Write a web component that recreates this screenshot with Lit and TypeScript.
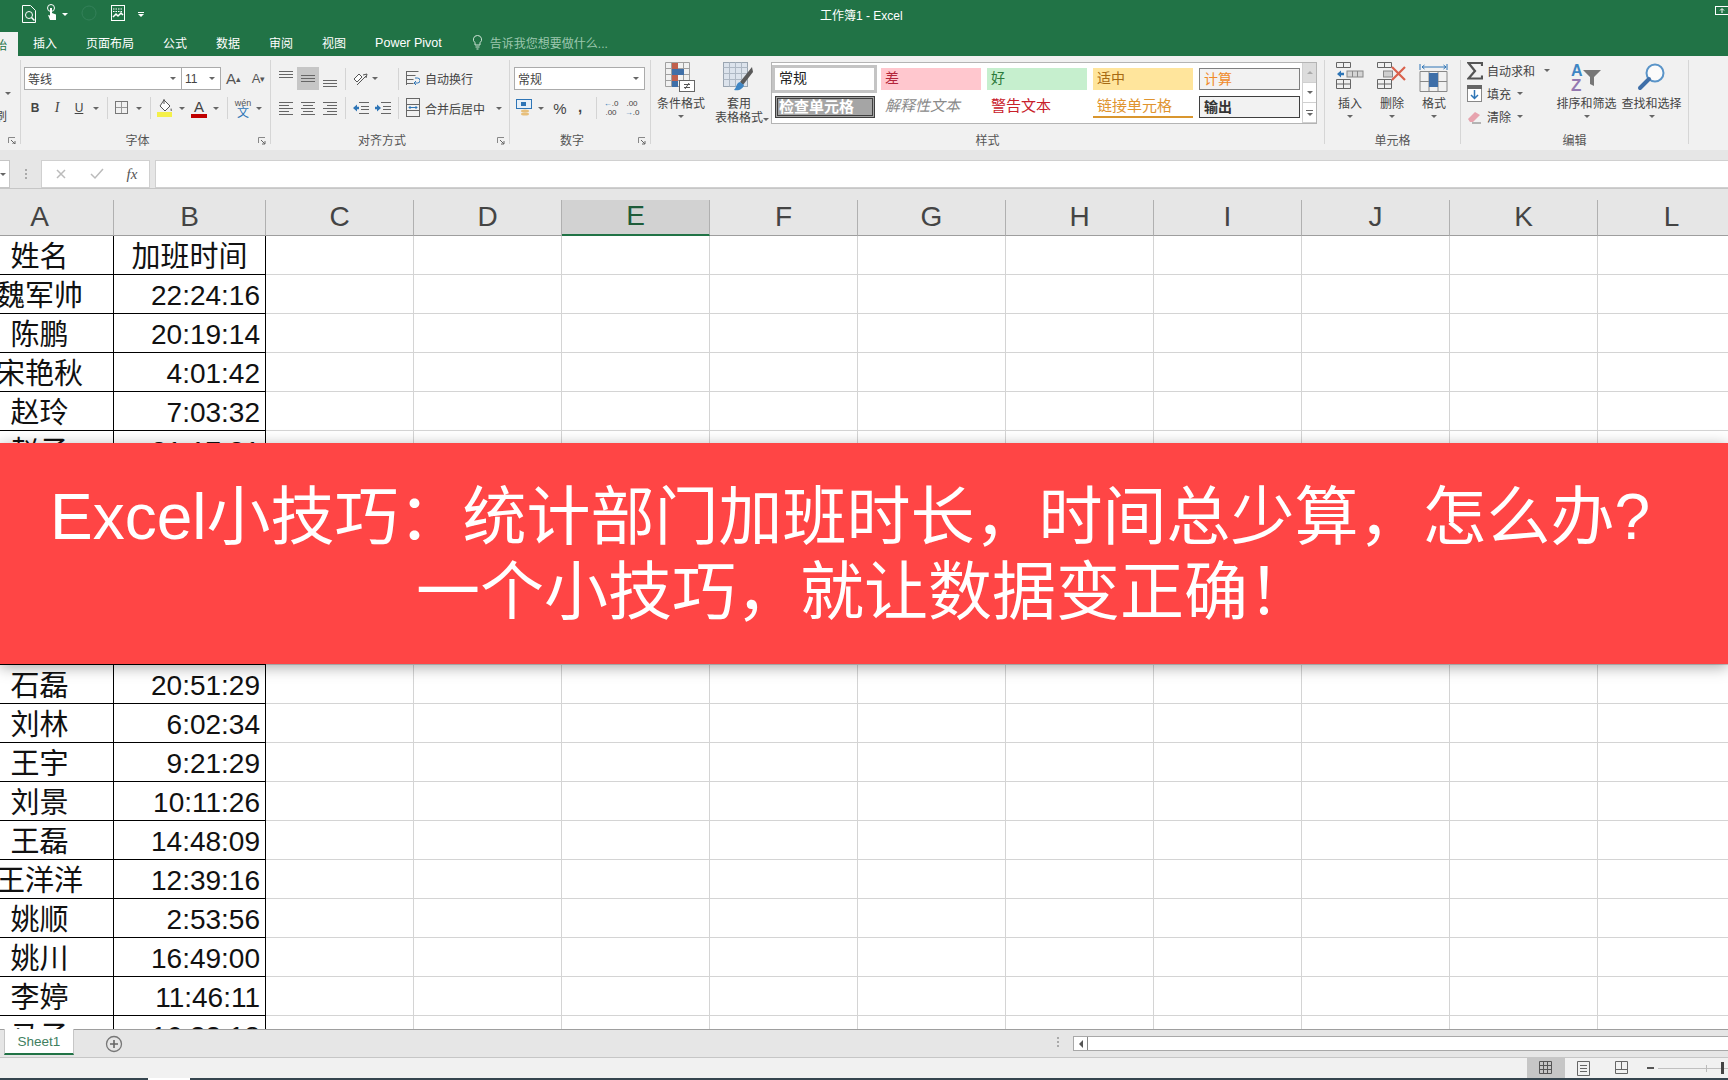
import { LitElement, html, css, svg } from "lit";
import { customElement } from "lit/decorators.js";

const caret = html`<i class="caret"></i>`;
const sep = html`<div class="c"><i class="sep"></i></div>`;

const ic = (w: number, h: number, body: unknown) =>
  html`<svg width=${w} height=${h} viewBox="0 0 ${w} ${h}" fill="none">${body}</svg>`;

const lines = (rows: [number, number, number][], stroke = "#666") =>
  ic(16, 22, rows.map(([x1, x2, y]) => svg`<path d="M${x1} ${y + 0.5}H${x2}" stroke=${stroke}/>`));

const iconTop = lines([[1, 15, 3], [1, 15, 6], [1, 15, 9]]);
const iconMid = lines([[1, 15, 7], [1, 15, 10], [1, 15, 13]]);
const iconBot = lines([[1, 15, 12], [1, 15, 15], [1, 15, 18]]);
const iconL = lines([[1, 15, 5], [1, 11, 8], [1, 15, 11], [1, 11, 14], [1, 15, 17]]);
const iconC = lines([[1, 15, 5], [3, 13, 8], [1, 15, 11], [3, 13, 14], [1, 15, 17]]);
const iconR = lines([[1, 15, 5], [5, 15, 8], [1, 15, 11], [5, 15, 14], [1, 15, 17]]);

const iconOutdent = ic(18, 16, svg`<path d="M7 2.5H17M9 6.5H17M9 9.5H17M7 13.5H17" stroke="#666"/><path d="M1 8l4-3.5v2.3h2v2.4H5v2.3z" fill="#2e75b6"/>`);
const iconIndent = ic(18, 16, svg`<path d="M7 2.5H17M9 6.5H17M9 9.5H17M7 13.5H17" stroke="#666"/><path d="M7 8L3 4.500v2.300H1v2.400h2v2.300z" fill="#2e75b6"/>`);

const iconOrient = ic(18, 18, svg`<path d="M3 9l5-5 3 3-5 5z" stroke="#555" fill="#fff"/><path d="M6 15l9-9" stroke="#555"/><path d="M12 5l4-1-1 4" stroke="#555"/>`);
const iconWrap = ic(14, 18, svg`<path d="M.5 1.500h12M.5 5.500h9M.5 9.500h7M.5 13.500h7M.5 1v14" stroke="#666"/><path d="M9 13h2.500a2 2 0 000-5H9" stroke="#2e75b6"/><path d="M10 11l-2 2 2 2" stroke="#2e75b6"/>`);
const iconMerge = ic(14, 20, svg`<rect x=".5" y=".5" width="13" height="18" stroke="#666"/><path d="M.5 6.500h13M.5 12.500h13" stroke="#666"/><path d="M3 9.500h8M4.500 8l-1.500 1.500L4.500 11M9.500 8l1.500 1.500L9.500 11" stroke="#2e75b6"/>`);
const iconBorder = ic(14, 14, svg`<rect x=".5" y=".5" width="12" height="12" stroke="#777"/><path d="M6.500 1v11M1 6.500h11" stroke="#999"/>`);
const iconFill = ic(18, 20, svg`<path d="M8 2l6 6-5 5-5-5z" stroke="#555" fill="#fff"/><path d="M8 1v5" stroke="#555"/><path d="M15 10c1 1.500 1.500 2.500 .5 3s-1.500-1.500-.5-3z" fill="#777"/><rect x="1" y="14" width="15" height="5" fill="#f4f04a"/>`);
const iconCurrency = ic(18, 20, svg`<rect x=".5" y="1.500" width="15" height="9" stroke="#2e75b6" fill="#e7f0f8"/><rect x="5" y="4" width="5" height="4" fill="#2e75b6"/><ellipse cx="9" cy="13" rx="4" ry="1.500" fill="#e7bf7b"/><ellipse cx="9" cy="16" rx="4" ry="1.500" fill="#e7bf7b"/>`);

const iconCond = ic(32, 30, svg`
  <path d="M.5 .5h24v24H.5zM6.500 .5v24M12.500 .5v24M18.500 .5v24M.5 6.500h24M.5 12.500h24M.5 18.500h24" stroke="#a0a0a0"/>
  <rect x="7" y="1" width="6" height="6" fill="#c0604d"/><rect x="7" y="7" width="12" height="6" fill="#3f6fa8"/>
  <rect x="7" y="13" width="6" height="6" fill="#c0604d"/><rect x="7" y="19" width="6" height="6" fill="#3f6fa8"/>
  <rect x="14.500" y="18.500" width="15" height="11" fill="#fff" stroke="#666"/>
  <path d="M19 22.500h6M19 25.500h6M24 21l-4 6" stroke="#555"/>`);
const iconTable = ic(32, 30, svg`
  <rect x=".5" y=".5" width="24" height="24" fill="#dce3ec" stroke="#9aa5b1"/>
  <path d="M.5 5.500h24M.5 11.500h24M.5 17.500h24M6.500 .5v24M12.500 .5v24M18.500 .5v24" stroke="#aeb8c4"/>
  <path d="M29 5L17 20l3 3 10-13z" fill="#5a5a5a"/>
  <path d="M17 20c-4 1-3 5-6 8 5 1 9-1 10-5z" fill="#3f86c4"/>`);
const iconIns = ic(28, 28, svg`
  <path d="M.5 .5h14v5h-14zM7.500 .5v5M.5 17.500h14v9h-14zM7.500 17.500v9M.5 22h14" stroke="#666"/>
  <rect x="11" y="9" width="16" height="6" fill="#d5d5d5" stroke="#888"/><path d="M16.500 9v6M21.500 9v6" stroke="#888"/>
  <path d="M1 12l4-3.500v2.300h3v2.400H5v2.300z" fill="#2e75b6"/>`);
const iconDel = ic(30, 28, svg`
  <path d="M.5 .5h14v5h-14zM7.500 .5v5M.5 17.500h14v9h-14zM7.500 17.500v9M.5 22h14" stroke="#666"/>
  <rect x="6.500" y="9" width="9" height="6" fill="#cfcfcf" stroke="#888"/>
  <path d="M15 5l13 13M28 5L15 18" stroke="#d9614c" stroke-width="2.200"/>`);
const iconFmt = ic(30, 30, svg`
  <path d="M1 2v6M28 2v6M3 5h24M3 5l2.500-2M3 5l2.500 2M27 5l-2.500-2M27 5l-2.500 2" stroke="#2e75b6"/>
  <path d="M1 9.500h27v20H1zM10 9.500v20M19 9.500v20M1 19.500h27" stroke="#888"/>
  <rect x="10" y="11" width="9" height="14" fill="#3f6fa8"/>`);
const iconSigma = ic(16, 18, svg`<path d="M15 4V1H1.500L8 9l-6.500 7.500H15v-3" stroke="#555" stroke-width="2.200"/>`);
const iconDown = ic(15, 17, svg`<rect x=".5" y=".5" width="14" height="16" fill="#fff" stroke="#888"/><rect x="0" y="0" width="15" height="4" fill="#666"/><path d="M7.500 5v8M4 10l3.500 3.500L11 10" stroke="#2e75b6" stroke-width="1.500"/>`);
const iconEraser = ic(15, 14, svg`<path d="M1 9l7-7 5 3-7 7H3z" fill="#e7a3ae"/><path d="M5 13h9" stroke="#777"/>`);
const iconSort = ic(32, 30, svg`
  <text x="0" y="14" font-size="16" font-weight="700" fill="#3f86c4" font-family="Liberation Sans">A</text>
  <text x="0" y="29" font-size="17" font-weight="700" fill="#9478b0" font-family="Liberation Sans">Z</text>
  <path d="M12 8h18l-7 7v9l-4-2v-7z" fill="#777"/>`);
const iconFind = ic(30, 30, svg`<circle cx="18" cy="11" r="8.500" stroke="#5a94c8" stroke-width="2" fill="#fbfbfb"/><path d="M12 17L3 26" stroke="#3f6fa8" stroke-width="4" stroke-linecap="round"/>`);
const launcher = html`<svg class="launcher" width="8" height="8" viewBox="0 0 8 8" fill="none"><path d="M.5 6V.5H7" stroke="#888"/><path d="M3 3l4 4M7 4v3H4" stroke="#666"/></svg>`;

type Big = { icon: unknown; lines: string[]; cls?: string };
const big = (b: Big) => html`
  <div class="big ${b.cls ?? ""}">
    <div class="big-ic">${b.icon}</div>
    ${b.lines.map((l) => html`<div class="big-t">${l}</div>`)}
    ${caret}
  </div>`;

const COLS = ["A", "B", "C", "D", "E", "F", "G", "H", "I", "J", "K", "L", "M"];
const ROWS: [string, string][] = [
  ["姓名", "加班时间"], ["魏军帅", "22:24:16"], ["陈鹏", "20:19:14"], ["宋艳秋", "4:01:42"], ["赵玲", "7:03:32"],
  ["赵子", "21:17:31"], ["", ""], ["", ""], ["", ""], ["", ""], ["", ""],
  ["石磊", "20:51:29"], ["刘林", "6:02:34"], ["王宇", "9:21:29"], ["刘景", "10:11:26"], ["王磊", "14:48:09"],
  ["王洋洋", "12:39:16"], ["姚顺", "2:53:56"], ["姚川", "16:49:00"], ["李婷", "11:46:11"], ["马子", "16:33:18"],
];

@customElement("app-root")
export class AppRoot extends LitElement {
  static styles = css`
    :host { display: block; position: relative; width: 1728px; height: 1080px; overflow: hidden; background: #e6e6e6;
      font-family: "Liberation Sans", "Noto Sans CJK SC", sans-serif; color: #444; font-size: 12px; }
    .app { display: flex; flex-direction: column; height: 1080px; }
    i { display: block; font-style: normal; }
    .caret { width: 0; height: 0; border: 3px solid transparent; border-top: 3px solid #666; border-bottom: 0; }
    .c { display: flex; align-items: center; justify-content: center; height: 100%; min-width: 0; }
    .sep { width: 1px; height: 22px; background: #d4d4d4; }

    .title { height: 28px; background: #217346; display: grid; grid-template-columns: 820px auto 1fr; align-items: center; color: #fff; }
    .qat { display: flex; align-items: center; padding-left: 22px; height: 28px; }
    .qat .caret { border-top-color: #fff; }
    .qat-touch { margin-left: 9px; }
    .qat-c1 { margin-left: 4px; }
    .qat-circle { margin-left: 13px; }
    .qat-chart { margin-left: 14px; }
    .qat-more { margin-left: 13px; display: flex; flex-direction: column; gap: 1px; align-items: center; }
    .qat-more b { display: block; width: 6px; height: 1px; background: #fff; }
    .win { justify-self: end; margin-top: -6px; }

    .tabs { height: 28px; background: #217346; display: flex; align-items: center; gap: 29px; color: #fff; }
    .tab-active { align-self: flex-end; height: 24px; width: 18px; background: #f1f1f1; color: #217346; display: flex; justify-content: flex-end; align-items: center; padding-right: 11px; box-sizing: border-box; overflow: hidden; margin-right: -14px; white-space: nowrap; flex: none; }
    .tab-pp { font-size: 12.5px; padding-top: 1px; }
    .tell { display: flex; align-items: center; gap: 8px; color: #9cc7ae; margin-left: 2px; }

    .ribbon { height: 94px; background: #f1f1f1; display: flex; padding-top: 4px; box-sizing: border-box; align-items: flex-start; }
    .group { height: 84px; border-right: 1px solid #d6d6d6; display: grid; grid-template-rows: 72px 12px; flex: none; box-sizing: border-box; }
    .body { min-width: 0; }
    .label { display: grid; grid-template-columns: 1fr; align-items: center; line-height: 16px; height: 16px; margin-top: 1px; color: #555; text-align: center; }
    .label.has-l { grid-template-columns: 1fr 16px; }
    .label.clip { grid-template-columns: 4px 16px; }
    .launcher { justify-self: center; }
    .g-clip { width: 21px; overflow: hidden; }
    .g-clip .body { display: flex; flex-direction: column; align-items: flex-start; }
    .clip-caret { margin: 32px 0 0 5px; }
    .clip-t { margin: 14px 0 0 -5px; line-height: 16px; white-space: nowrap; }
    .g-font { width: 250px; padding-left: 3px; }
    .g-align { width: 239px; padding-left: 4px; }
    .g-num { width: 141px; padding-left: 4px; }
    .g-style { width: 674px; }
    .g-cells { width: 136px; }
    .g-edit { width: 228px; }
    .g-font .label { margin-left: -3px; }
    .g-align .label, .g-num .label { margin-left: -4px; }

    .r1 { height: 23px; margin-top: 7px; display: grid; }
    .r2 { height: 24px; margin-top: 6px; display: grid; }
    .f1 { grid-template-columns: 158px 39px 25px 25px; }
    .f2 { grid-template-columns: 22px 22px 22px 12px 10px 20px 14px 8px 22px 12px 22px 12px 10px 22px 10px; }
    .a1 { grid-template-columns: 22px 22px 22px 8px 22px 8px 14px 10px 1fr; }
    .a2 { grid-template-columns: 22px 22px 22px 8px 24px 20px 10px 1fr; }
    .n2 { grid-template-columns: 22px 10px 4px 20px 20px 1px 10px 20px 1px 20px; }
    .combo { background: #fff; border: 1px solid #ababab; box-sizing: border-box; display: flex; align-items: center; justify-content: space-between; padding: 0 5px 0 3px; height: 23px; }
    .combo + .combo { border-left: 0; }
    .combo.num { width: 131px; }
    .hl { background: #c6c6c6; }
    .b { font-weight: 700; }
    .it { font-style: italic; font-family: "Liberation Serif", serif; font-size: 14px; }
    .u { text-decoration: underline; }
    .aa { font-size: 15px; color: #555; }
    .aa small { font-size: 9px; vertical-align: 7px; }
    .aa2 { font-size: 13px; }
    .color { display: flex; flex-direction: column; align-items: center; line-height: 15px; font-size: 15px; }
    .color i { width: 16px; height: 4px; background: #c00000; }
    .wen { display: flex; flex-direction: column; align-items: center; font-size: 9px; line-height: 10px; color: #555; }
    .wen b { font-weight: 400; color: #2e75b6; font-size: 12px; line-height: 11px; }
    .lbl { display: flex; align-items: center; gap: 5px; height: 100%; white-space: nowrap; margin-left: 3px; }
    .m-left { margin-left: 6px; }
    .pct { font-size: 15px; }
    .com { font-size: 15px; font-weight: 700; padding-bottom: 4px; box-sizing: border-box; }
    .dec { font-size: 8px; line-height: 9px; text-align: center; white-space: nowrap; }
    .dec b { font-weight: 400; color: #2e75b6; }

    .g-style .body { display: flex; align-items: flex-start; }
    .big { display: flex; flex-direction: column; align-items: center; flex: none; }
    .big-ic { height: 34px; margin-top: 2px; display: flex; align-items: flex-start; justify-content: center; }
    .big-t { line-height: 16px; white-space: nowrap; }
    .big .caret { margin-top: 3px; }
    .big-t + .big-t { margin-top: -2px; }
    .w-cond { width: 60px; }
    .w-tbl { width: 56px; position: relative; }
    .w-tbl .caret { position: absolute; left: 52px; top: 58px; margin: 0; }
    .gallery { width: 546px; height: 62px; margin: 2px 0 0 4px; border: 1px solid #b4b4b4; background: #fff; box-sizing: border-box; display: flex; justify-content: space-between; }
    .g-grid { display: grid; grid-template-columns: repeat(5, 100px); grid-auto-rows: 22px; gap: 6px; padding: 5px 0 0 3px; }
    .sty { font-size: 14px; line-height: 20px; padding-left: 4px; box-sizing: border-box; white-space: nowrap; overflow: hidden; }
    .s-norm { outline: 3px solid #c4c4c4; outline-offset: 0; margin: 0 1px 0 0; color: #222; }
    .s-bad { background: #ffc7ce; color: #b3243a; }
    .s-good { background: #c6efce; color: #2c7a3a; }
    .s-mid { background: #ffe59c; color: #a66a12; }
    .s-calc { background: #f2f2f2; border: 1px solid #7f7f7f; color: #f08a2a; line-height: 20px; margin-right: -1px; }
    .s-chk { background: #a5a5a5; border: 3px double #3f3f3f; color: #fff; font-size: 15px; line-height: 16px; padding-left: 1px; font-weight: 700; }
    .s-exp { color: #8a8a8a; font-style: italic; font-size: 15px; }
    .s-warn { color: #c8202a; font-size: 15px; }
    .s-link { color: #e0942f; border-bottom: 2px solid #d9962e; font-size: 15px; }
    .s-out { background: #f2f2f2; border: 1px solid #3f3f3f; color: #333; line-height: 20px; margin-right: -1px; font-weight: 700; }
    .g-scroll { width: 13px; border-left: 1px solid #d0d0d0; display: grid; grid-template-rows: 1fr 1fr 1fr; box-sizing: content-box; }
    .g-scroll > div { display: flex; align-items: center; justify-content: center; flex-direction: column; gap: 2px; border-bottom: 1px solid #d0d0d0; }
    .g-scroll > div:first-child { background: #dcdcdc; }
    .g-scroll > div:first-child .caret { transform: rotate(180deg); border-top-color: #aaa; }
    .g-scroll b { display: block; width: 7px; height: 1px; background: #666; }

    .g-cells .body { display: flex; padding-left: 4px; }
    .w-c { width: 42px; }
    .g-edit .body { display: flex; }
    .ed-col { width: 93px; padding: 0 0 0 6px; margin-top: -1px; box-sizing: border-box; display: grid; grid-template-rows: 23px 23px 23px; }
    .ed-row { display: flex; align-items: center; gap: 5px; white-space: nowrap; font-size: 12px; }
    .ed-row .caret { margin-left: 1px; }
    .ed-row.sum { gap: 4px; }
    .ed-row.sum .caret { margin-left: 5px; }
    .w-e { width: 65px; }

    .fgap { height: 10px; background: #e6e6e6; }
    .fbar { height: 28px; background: #e6e6e6; display: flex; }
    .fname { width: 10px; background: #fff; border: 1px solid #c6c6c6; border-left: 0; box-sizing: border-box; display: flex; align-items: center; }
    .fdots { width: 31px; display: flex; flex-direction: column; align-items: center; justify-content: center; gap: 2px; }
    .fdots b { display: block; width: 2px; height: 2px; background: #aaa; }
    .fbtns { width: 109px; background: #fff; border: 1px solid #d0d0d0; box-sizing: border-box; display: grid; grid-template-columns: 37px 36px 1fr; color: #bbb; }
    .fx { color: #555; font-family: "Liberation Serif", serif; font-style: italic; font-size: 15px; }
    .finput { flex: 1; margin-left: 5px; background: #fff; border: 1px solid #d0d0d0; border-right: 0; box-sizing: border-box; }
    .sgap { height: 12px; background: #e6e6e6; border-top: 1px solid #c6c6c6; box-sizing: border-box; }

    .sheet { height: 829px; overflow: hidden; background: #fff; }
    .grid { display: grid; grid-template-columns: 148px 152px repeat(11, 148px); grid-template-rows: 36px; grid-auto-rows: 39px; margin-left: -34px; width: 1800px; color: #111; font-size: 28px; }
    .h { background: #e6e6e6; color: #444; border-right: 1px solid #b0b0b0; border-bottom: 1px solid #9e9e9e; box-sizing: border-box; display: flex; align-items: center; justify-content: center; padding-bottom: 2px; }
    .h.sel { background: #d2d2d2; color: #1f5c3a; border-bottom: 2px solid #217346; }
    .d { border-right: 1px solid #d4d4d4; border-bottom: 1px solid #d4d4d4; box-sizing: border-box; }
    .t { border-right: 1px solid #000; border-bottom: 1px solid #000; box-sizing: border-box; display: flex; align-items: center; justify-content: center; line-height: 38px; white-space: nowrap; padding-top: 4px; }
    .t.cjk { font-size: 29px; }
    .t.v { justify-content: flex-end; padding-right: 5px; }

    .tabbar { height: 29px; background: #e6e6e6; border-top: 1px solid #9e9e9e; border-bottom: 1px solid #c6c6c6; box-sizing: border-box; display: flex; align-items: flex-start; }
    .sheet-tab { margin: -1px 0 0 4px; width: 70px; height: 26px; box-sizing: border-box; background: #fff; border: 1px solid #c6c6c6; border-top: 0; border-bottom: 2px solid #217346; color: #3f7f5f; font-size: 13.5px; display: flex; align-items: center; justify-content: center; }
    .add { margin: 5px 0 0 31px; }
    .tab-dots { margin: 4px 0 0 929px; width: 12px; display: flex; flex-direction: column; gap: 2px; align-items: center; padding-top: 3px; }
    .tab-dots b { display: block; width: 2px; height: 2px; background: #aaa; }
    .hscroll { margin: 6px 0 0 9px; flex: 1; height: 15px; background: #fff; border: 1px solid #a8a8a8; border-right: 0; box-sizing: border-box; display: flex; }
    .hleft { width: 13px; border-right: 1px solid #888; display: flex; align-items: center; justify-content: center; }
    .tri { width: 0; height: 0; border: 4px solid transparent; border-right: 4px solid #555; border-left: 0; }

    .status { height: 20px; background: #f1f1f1; display: flex; align-items: center; }
    .vbtn { width: 38px; height: 20px; display: flex; align-items: center; justify-content: center; flex: none; }
    .vbtn.on { margin-left: 1527px; background: #c6c6c6; }
    .zoom-m { width: 7px; height: 2px; background: #555; margin-left: 6px; flex: none; }
    .slider { flex: 1; height: 1px; background: #c0c0c0; margin-left: 4px; display: flex; align-items: center; justify-content: flex-end; }
    .thumb { width: 3px; height: 12px; background: #444; margin-right: 4px; }
    .tick { width: 1px; height: 7px; background: #bbb; margin-right: 14px; }
    .bottom { height: 2px; background: #36454f; display: flex; }
    .bottom b { display: block; margin-left: 148px; width: 42px; background: #fff; }

    .band { position: absolute; left: 0; right: 0; top: 443px; height: 221px; padding-top: 2px; box-sizing: border-box; background: #ff4545; box-shadow: 0 3px 14px rgba(0,0,0,.35); display: flex; flex-direction: column; align-items: center; justify-content: center; color: #fff; font-size: 64px; line-height: 75px; white-space: nowrap; }
    .band-1 { margin-right: 28px; }
  `;

  render() {
    return html`
      <div class="app">
        <div class="title">
          <div class="qat">
            ${ic(15, 18, svg`<path d="M.5 .5h8l5 5v12H.5z" stroke="#fff"/><circle cx="7" cy="10" r="3.500" stroke="#fff"/><path d="M9.500 12.500l3 3" stroke="#fff" stroke-width="1.500"/>`)}
            <span class="qat-touch">${ic(12, 18, svg`<circle cx="5" cy="4" r="3.500" stroke="#fff"/><path d="M4 4h2v5l4 1.500V16H4L2 11l2 .5z" fill="#fff"/>`)}</span>
            <span class="qat-c1">${caret}</span>
            <span class="qat-circle">${ic(16, 16, svg`<circle cx="8" cy="8" r="7" stroke="#338059"/>`)}</span>
            <span class="qat-chart">${ic(14, 16, svg`<rect x=".5" y=".5" width="13" height="15" stroke="#fff"/><path d="M2 4h10M2 6.500h10" stroke="#fff" stroke-dasharray="1.500 1"/><path d="M2 12l3-3 2 2 3-3 2 2" stroke="#fff" stroke-width="1.500"/>`)}</span>
            <span class="qat-more"><b></b>${caret}</span>
          </div>
          <div>工作簿1 - Excel</div>
          <div class="win">${ic(13, 9, svg`<rect x=".5" y=".5" width="14" height="8" stroke="#fff"/><path d="M7 7V3M5 4.500l2-2 2 2" stroke="#fff"/>`)}</div>
        </div>

        <div class="tabs">
          <div class="tab-active">开始</div>
          <div>插入</div><div>页面布局</div><div>公式</div><div>数据</div><div>审阅</div><div>视图</div>
          <div class="tab-pp">Power Pivot</div>
          <div class="tell">${ic(9, 15, svg`<path d="M4.500 .5a4 4 0 012.500 7.200V10H2V7.700A4 4 0 014.500 .5zM2.500 12h4M3.500 14h2" stroke="#cfe3d6"/>`)}<span>告诉我您想要做什么...</span></div>
        </div>

        <div class="ribbon">
          <div class="group g-clip">
            <div class="body"><i class="caret clip-caret"></i><div class="clip-t">刷</div></div>
            <div class="label clip"><span></span>${launcher}</div>
          </div>

          <div class="group g-font">
            <div class="body">
              <div class="r1 f1">
                <div class="combo"><span>等线</span>${caret}</div>
                <div class="combo"><span>11</span>${caret}</div>
                <div class="c aa">A<small>▴</small></div>
                <div class="c aa aa2">A<small>▾</small></div>
              </div>
              <div class="r2 f2">
                <div class="c b">B</div><div class="c it">I</div><div class="c u">U</div><div class="c">${caret}</div>
                ${sep}
                <div class="c">${iconBorder}</div><div class="c">${caret}</div>
                ${sep}
                <div class="c">${iconFill}</div><div class="c">${caret}</div>
                <div class="c"><div class="color">A<i></i></div></div><div class="c">${caret}</div>
                ${sep}
                <div class="c"><div class="wen">wén<b>文</b></div></div><div class="c">${caret}</div>
              </div>
            </div>
            <div class="label has-l"><span>字体</span>${launcher}</div>
          </div>

          <div class="group g-align">
            <div class="body">
              <div class="r1 a1">
                <div class="c">${iconTop}</div><div class="c hl">${iconMid}</div><div class="c">${iconBot}</div>
                ${sep}
                <div class="c">${iconOrient}</div>
                <div class="c">${caret}</div><div></div>
                ${sep}
                <div class="lbl">${iconWrap}<span>自动换行</span></div>
              </div>
              <div class="r2 a2">
                <div class="c">${iconL}</div><div class="c">${iconC}</div><div class="c">${iconR}</div>
                ${sep}
                <div class="c">${iconOutdent}</div><div class="c">${iconIndent}</div>
                ${sep}
                <div class="lbl">${iconMerge}<span>合并后居中</span><span class="c m-left">${caret}</span></div>
              </div>
            </div>
            <div class="label has-l"><span>对齐方式</span>${launcher}</div>
          </div>

          <div class="group g-num">
            <div class="body">
              <div class="r1"><div class="combo num"><span>常规</span>${caret}</div></div>
              <div class="r2 n2">
                <div class="c">${iconCurrency}</div><div class="c">${caret}</div><div></div>
                <div class="c pct">%</div><div class="c com">,</div><div></div>
                ${sep}
                <div class="c dec"><div><b>←</b>.0<br />.00</div></div><div></div>
                <div class="c dec"><div>.00<br /><b>→</b>.0</div></div>
              </div>
            </div>
            <div class="label has-l"><span>数字</span>${launcher}</div>
          </div>

          <div class="group g-style">
            <div class="body">
              ${big({ icon: iconCond, lines: ["条件格式"], cls: "w-cond" })}
              ${big({ icon: iconTable, lines: ["套用", "表格格式"], cls: "w-tbl" })}
              <div class="gallery">
                <div class="g-grid">
                  <div class="sty s-norm">常规</div><div class="sty s-bad">差</div><div class="sty s-good">好</div><div class="sty s-mid">适中</div><div class="sty s-calc">计算</div>
                  <div class="sty s-chk">检查单元格</div><div class="sty s-exp">解释性文本</div><div class="sty s-warn">警告文本</div><div class="sty s-link">链接单元格</div><div class="sty s-out">输出</div>
                </div>
                <div class="g-scroll">
                  <div>${caret}</div><div>${caret}</div><div><b></b>${caret}</div>
                </div>
              </div>
            </div>
            <div class="label"><span>样式</span></div>
          </div>

          <div class="group g-cells">
            <div class="body">
              ${big({ icon: iconIns, lines: ["插入"], cls: "w-c" })}
              ${big({ icon: iconDel, lines: ["删除"], cls: "w-c" })}
              ${big({ icon: iconFmt, lines: ["格式"], cls: "w-c" })}
            </div>
            <div class="label"><span>单元格</span></div>
          </div>

          <div class="group g-edit">
            <div class="body">
              <div class="ed-col">
                <div class="ed-row sum">${iconSigma}<span>自动求和</span>${caret}</div>
                <div class="ed-row">${iconDown}<span>填充</span>${caret}</div>
                <div class="ed-row">${iconEraser}<span>清除</span>${caret}</div>
              </div>
              ${big({ icon: iconSort, lines: ["排序和筛选"], cls: "w-e" })}
              ${big({ icon: iconFind, lines: ["查找和选择"], cls: "w-e" })}
            </div>
            <div class="label"><span>编辑</span></div>
          </div>
        </div>

        <div class="fgap"></div>
        <div class="fbar">
          <div class="fname">${caret}</div>
          <div class="fdots"><b></b><b></b><b></b></div>
          <div class="fbtns">
            <div class="c">${ic(12, 12, svg`<path d="M2 2l8 8M10 2l-8 8" stroke="#bbb" stroke-width="1.500"/>`)}</div>
            <div class="c">${ic(14, 12, svg`<path d="M1 6l4 4 8-9" stroke="#bbb" stroke-width="1.500"/>`)}</div>
            <div class="c fx">fx</div>
          </div>
          <div class="finput"></div>
        </div>
        <div class="sgap"></div>

        <div class="sheet">
          <div class="grid">
            ${COLS.map((c) => html`<div class="h ${c === "E" ? "sel" : ""}">${c}</div>`)}
            ${ROWS.map(([a, b]) => html`
              <div class="t cjk">${a}</div>
              <div class="t ${/\d/.test(b) ? "v" : "cjk"}">${b}</div>
              ${COLS.slice(2).map(() => html`<div class="d"></div>`)}
            `)}
          </div>
        </div>

        <div class="tabbar">
          <div class="sheet-tab">Sheet1</div>
          <div class="add">${ic(18, 18, svg`<circle cx="9" cy="9" r="7.500" stroke="#777" stroke-width="1.300"/><path d="M9 5v8M5 9h8" stroke="#666" stroke-width="1.600"/>`)}</div>
          <div class="tab-dots"><b></b><b></b><b></b></div>
          <div class="hscroll"><div class="hleft"><i class="tri"></i></div></div>
        </div>

        <div class="status">
          <div class="vbtn on">${ic(14, 14, svg`<path d="M.5 .5h12v12H.5zM4.500 .5v12M8.500 .5v12M.5 4.500h12M.5 8.500h12" stroke="#555"/>`)}</div>
          <div class="vbtn">${ic(14, 15, svg`<path d="M.5 .5h12v14H.5zM3 4.500h7M3 7.500h7M3 10.500h7" stroke="#666"/>`)}</div>
          <div class="vbtn">${ic(14, 14, svg`<path d="M.5 .5h12v12H.5zM.5 8.500h12M6.500 .5v8" stroke="#666"/>`)}</div>
          <i class="zoom-m"></i>
          <div class="slider"><i class="tick"></i><i class="thumb"></i></div>
        </div>
        <div class="bottom"><b></b></div>
      </div>

      <div class="band">
        <div class="band-1">Excel小技巧：统计部门加班时长，时间总少算，怎么办?</div>
        <div>一个小技巧，就让数据变正确！</div>
      </div>
    `;
  }
}
